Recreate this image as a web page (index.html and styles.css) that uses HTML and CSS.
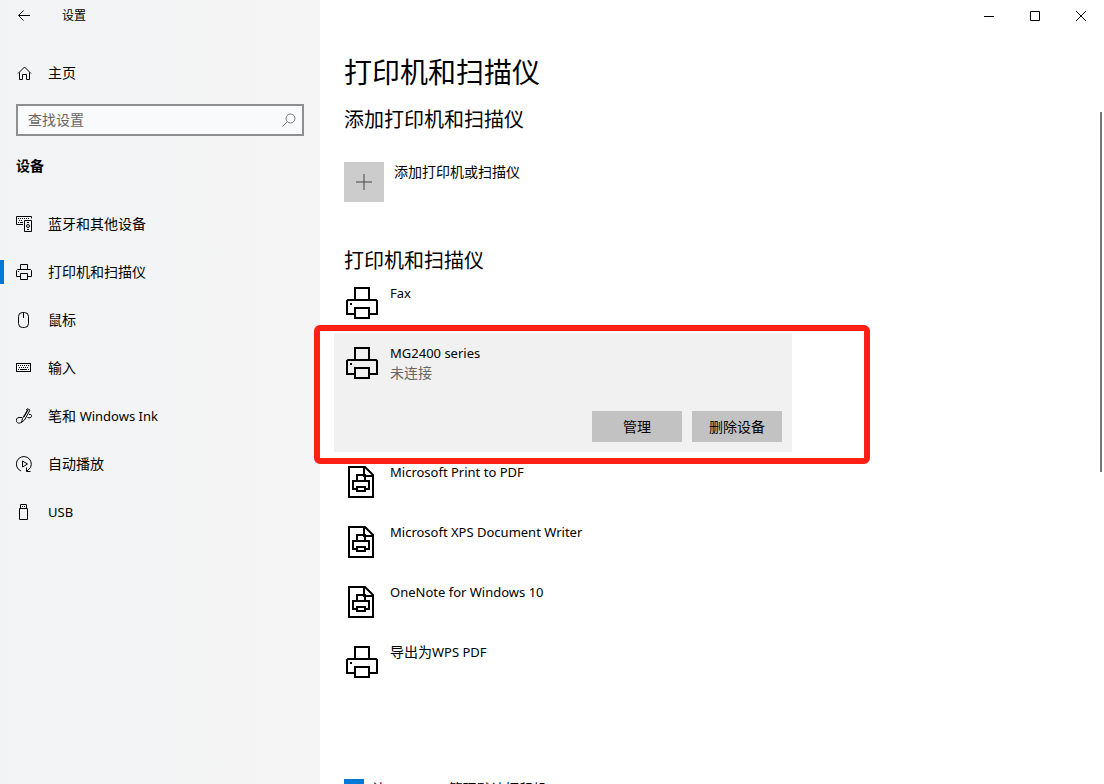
FILE: index.html
```html
<!DOCTYPE html>
<html lang="zh-CN">

<head>
   <meta charset="UTF-8">
   <meta name="viewport" content="width=device-width, initial-scale=1.0">
   <title>设置</title>
   <link rel="stylesheet" href="styles.css">
</head>

<body>
   <!-- Shared icons -->
   <svg class="icon-defs" aria-hidden="true">
      <symbol id="icon-printer" viewBox="0 0 32 32">
         <path d="M9 13V1h14v12M9 27H1V14l1-1h28l1 1v13h-8M9 21h14v10H9z" />
         <path d="M4 17h2" />
      </symbol>
      <symbol id="icon-document" viewBox="0 0 32 32">
         <path d="M3 1h16l8 8v22H3zM18 1v9h9" />
         <path d="M11 15V9h8v6M11 23H7v-8h16v8h-4M11 21h8v4h-8z" />
      </symbol>
   </svg>

   <div class="window">
      <aside class="sidebar">
         <header class="sidebar-top">
            <button class="back" aria-label="返回">
               <svg class="icon" viewBox="0 0 16 16"><path d="M14 7.500H2.500M7.500 2.500l-5 5 5 5" /></svg>
            </button>
            <span class="app-name">设置</span>
         </header>

         <a class="home" href="#">
            <svg class="icon" viewBox="0 0 16 16"><path d="M2 8.500L8.500 2l6.500 6.500M3.500 7.500v7h3v-5h4v5h3v-7" /></svg>
            主页
         </a>

         <div class="search">
            <input type="text" class="search-input" placeholder="查找设置" aria-label="查找设置">
            <svg class="icon search-icon" viewBox="0 0 16 16"><circle cx="9.500" cy="6.500" r="4.500" /><path d="M6 10l-4.500 4.500" /></svg>
         </div>

         <h2 class="sidebar-heading">设备</h2>

         <nav class="nav">
            <a class="nav-item" href="#">
               <svg class="icon" viewBox="0 0 16 16">
                  <path d="M7 8.500H.5v-8h15v2M8.500 4.500h7v11h-7z" />
                  <path d="M2 2.500h1m1 0h1m1 0h1m1 0h1m1 0h1m1 0h1M3 4.500h1m1 0h1M2 6.500h1m1 0h3M11 6.500h2M11 13.500h2" />
                  <circle cx="12" cy="10" r="1.500" />
               </svg>
               <span>蓝牙和其他设备</span>
            </a>
            <a class="nav-item active" href="#">
               <svg class="icon" viewBox="0 0 16 16">
                  <path d="M4.500 5.500v-5h7v5M4.500 12.500h-4v-6l1-1h13l1 1v6h-4M4.500 9.500h7v6h-7zM2 7.500h1" />
               </svg>
               <span>打印机和扫描仪</span>
            </a>
            <a class="nav-item" href="#">
               <svg class="icon" viewBox="0 0 16 16"><rect x="2.500" y=".5" width="10" height="15" rx="4" /><path d="M7.500 1v5" /></svg>
               <span>鼠标</span>
            </a>
            <a class="nav-item" href="#">
               <svg class="icon" viewBox="0 0 16 16">
                  <rect x=".5" y="3.500" width="14" height="8" />
                  <path d="M2 5.500h1m1 0h1m1 0h1m1 0h1m1 0h1m1 0h1M3 7.500h1m1 0h1m1 0h1m1 0h1m1 0h1M2 9.500h1m1 0h7m1 0h1" />
               </svg>
               <span>输入</span>
            </a>
            <a class="nav-item" href="#">
               <svg class="icon" viewBox="0 0 16 16">
                  <path d="M5.500 14.500l1-4 5-8.500c1-1.500 3-.5 2 1l-5 9-3 2.500M8 9l4-7M10 2l2-1.500" />
                  <path d="M6 9.500H3C.5 9.500 0 12 .5 13.500s3.500 2.500 5 .5M13 6.500c2-.5 3 .5 2.500 2s-2 1.500-4 1" />
               </svg>
               <span>笔和 <span class="latin">Windows Ink</span></span>
            </a>
            <a class="nav-item" href="#">
               <svg class="icon" viewBox="0 0 16 16">
                  <path d="M5 15A7.500 7.500 0 1 1 14.500 11.500L11 15M10.500 11.500v4h4M6.500 5v6l5-3z" />
               </svg>
               <span>自动播放</span>
            </a>
            <a class="nav-item" href="#">
               <svg class="icon" viewBox="0 0 16 16"><path d="M3.500 4.500h8v11h-8zM4.500 4.500v-4h6v4M6 2.500h1m1 0h1" /></svg>
               <span class="latin">USB</span>
            </a>
         </nav>
      </aside>

      <main class="content">
         <div class="window-buttons">
            <button aria-label="最小化"><svg viewBox="0 0 10 10"><path d="M0 5.500h10" /></svg></button>
            <button aria-label="最大化"><svg viewBox="0 0 10 10"><path d="M.5.5h9v9h-9z" /></svg></button>
            <button aria-label="关闭"><svg viewBox="0 0 10 10"><path d="M0 0l10 10M10 0L0 10" /></svg></button>
         </div>

         <h1>打印机和扫描仪</h1>

         <h2 class="section-title">添加打印机和扫描仪</h2>
         <button class="add-device">
            <span class="add-icon">
               <svg class="icon" viewBox="0 0 16 16"><path d="M0 8h16M8 0v16" /></svg>
            </span>
            <span class="add-label">添加打印机或扫描仪</span>
         </button>

         <h2 class="section-title">打印机和扫描仪</h2>
         <ul class="devices">
            <li class="device">
               <svg class="device-icon"><use href="#icon-printer" /></svg>
               <span class="latin">Fax</span>
            </li>
            <li class="device selected">
               <svg class="device-icon"><use href="#icon-printer" /></svg>
               <div class="device-name">
                  <span class="latin">MG2400 series</span>
                  <div class="device-status">未连接</div>
               </div>
               <div class="device-actions">
                  <button>管理</button>
                  <button>删除设备</button>
               </div>
               <div class="highlight"></div>
            </li>
            <li class="device">
               <svg class="device-icon"><use href="#icon-document" /></svg>
               <span class="latin">Microsoft Print to PDF</span>
            </li>
            <li class="device">
               <svg class="device-icon"><use href="#icon-document" /></svg>
               <span class="latin">Microsoft XPS Document Writer</span>
            </li>
            <li class="device">
               <svg class="device-icon"><use href="#icon-document" /></svg>
               <span class="latin">OneNote for Windows 10</span>
            </li>
            <li class="device">
               <svg class="device-icon"><use href="#icon-printer" /></svg>
               <span>导出为<span class="latin">WPS PDF</span></span>
            </li>
         </ul>

         <label class="default-printer">
            <span class="checkbox">
               <input type="checkbox" checked>
               <svg viewBox="0 0 20 20"><path d="M4 10l4 4 9-9" /></svg>
            </span>
            <span>让 <span class="latin">Windows</span> 管理默认打印机</span>
         </label>

         <div class="scrollbar"></div>
      </main>
   </div>
</body>

</html>
```
FILE: styles.css
```css
* {
   box-sizing: border-box;
}

body {
   margin: 0;
   font-family: "Noto Sans", "Noto Sans CJK SC", sans-serif;
   font-size: 14px;
   line-height: 20px;
   color: #000;
   background-color: #fff;
}

button,
input {
   font: inherit;
   color: inherit;
}

button {
   padding: 0;
   border: none;
   background: none;
}

a {
   color: inherit;
   text-decoration: none;
}

h1,
h2 {
   margin: 0;
   font-weight: 400;
}

svg {
   fill: none;
   stroke: #000;
}

.icon-defs {
   position: absolute;
   width: 0;
   height: 0;
}

.icon {
   width: 16px;
   height: 16px;
   flex: none;
}

/* Latin letters run larger than the Chinese ones */
.latin {
   font-size: 13px;
}

.window {
   display: flex;
   height: 100vh;
   overflow: hidden;
}

/* Sidebar */

.sidebar {
   width: 320px;
   flex: none;
   background: linear-gradient(to right, #f2f3f5, #f5f5f5);
}

.sidebar-top {
   display: flex;
   align-items: center;
   height: 32px;
}

.back {
   display: flex;
   align-items: center;
   justify-content: center;
   width: 48px;
   height: 32px;
}

.app-name {
   margin-left: 14px;
   font-size: 12px;
}

.home {
   display: flex;
   align-items: center;
   gap: 16px;
   height: 48px;
   margin-top: 17px;
   margin-bottom: 7px;
   padding-left: 16px;
}

.search {
   display: flex;
   align-items: center;
   height: 32px;
   margin: 0 16px;
   padding: 0 5px 0 10px;
   border: 2px solid #8f8f90;
   background-color: #f9fafb;
}

.search-input {
   flex: 1;
   min-width: 0;
   padding: 0;
   border: none;
   outline: none;
   background: none;
}

.search-input::placeholder {
   color: #666;
   opacity: 1;
}

.search-icon {
   stroke: #777;
}

.sidebar-heading {
   margin: 20px 16px 24px;
   font-size: 14px;
   font-weight: 700;
}

.nav-item {
   display: flex;
   align-items: center;
   gap: 16px;
   height: 48px;
   padding-left: 16px;
}

/* Blue marker on the current page */
.nav-item.active {
   gap: 0;
   padding-left: 0;
}

.nav-item.active::before {
   content: "";
   width: 4px;
   height: 24px;
   background-color: #0078d7;
}

.nav-item.active .icon {
   margin: 0 16px 0 12px;
}

/* Content */

.content {
   position: relative;
   flex: 1;
   min-width: 0;
   padding-left: 24px;
}

.window-buttons {
   display: flex;
   justify-content: flex-end;
}

.window-buttons button {
   display: flex;
   align-items: center;
   justify-content: center;
   width: 46px;
   height: 32px;
}

.window-buttons svg {
   width: 10px;
   height: 10px;
}

h1 {
   margin-top: 20px;
   font-size: 28px;
   line-height: 40px;
}

.section-title {
   margin-top: 17px;
   margin-bottom: 1px;
   font-size: 20px;
   line-height: 22px;
}

.add-device {
   display: flex;
   align-items: flex-start;
   gap: 10px;
   margin-top: 31px;
   margin-bottom: 48px;
}

.add-icon {
   display: flex;
   align-items: center;
   justify-content: center;
   width: 40px;
   height: 40px;
   background-color: #ccc;
}

.add-icon svg {
   stroke: #444;
}

.devices {
   max-width: 458px;
   margin: 0 0 0 -10px;
   padding: 0;
   list-style: none;
}

.device {
   display: flex;
   flex-wrap: wrap;
   align-items: flex-start;
   gap: 12px;
   min-height: 60px;
   padding: 10px 10px 10px 12px;
}

.device-icon {
   width: 32px;
   height: 32px;
   margin-top: 4px;
   stroke-width: 2;
}

.device.selected {
   position: relative;
   row-gap: 28px;
   background-color: #f1f1f1;
}

.device-status {
   color: #666;
}

.device-actions {
   display: flex;
   justify-content: flex-end;
   gap: 10px;
   width: 100%;
}

.device-actions button {
   width: 90px;
   height: 31px;
   background-color: #c2c2c2;
}

/* Red frame around the selected printer */
.highlight {
   position: absolute;
   top: -8px;
   right: -78px;
   bottom: -12px;
   left: -20px;
   border: 6px solid #fd2015;
   border-radius: 6px;
   pointer-events: none;
}

.default-printer {
   display: flex;
   align-items: center;
   gap: 8px;
   margin-top: 87px;
}

.checkbox {
   display: grid;
}

.checkbox input,
.checkbox svg {
   grid-area: 1 / 1;
   width: 20px;
   height: 20px;
   margin: 0;
}

.checkbox input {
   appearance: none;
   background-color: #0078d7;
}

.checkbox svg {
   stroke: #fff;
   pointer-events: none;
}

.scrollbar {
   position: absolute;
   top: 112px;
   right: 2px;
   width: 2px;
   height: 360px;
   background-color: #767676;
}
```
